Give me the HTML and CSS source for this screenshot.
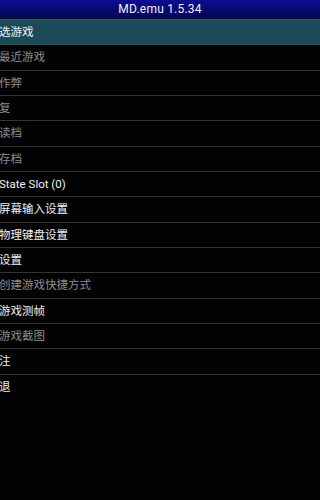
FILE: index.html
```html
<!DOCTYPE html>
<html lang="zh">
<head>
<meta charset="utf-8">
<link rel="stylesheet" href="styles.css">
</head>
<body>
<div class="app">
  <div class="titlebar">MD.emu 1.5.34</div>
  <ul class="menu">
    <li class="item selected">选游戏</li>
    <li class="item off">最近游戏</li>
    <li class="item off">作弊</li>
    <li class="item off">复</li>
    <li class="item off">读档</li>
    <li class="item off">存档</li>
    <li class="item">State Slot (0)</li>
    <li class="item">屏幕输入设置</li>
    <li class="item">物理键盘设置</li>
    <li class="item">设置</li>
    <li class="item off">创建游戏快捷方式</li>
    <li class="item">游戏测帧</li>
    <li class="item off">游戏截图</li>
    <li class="item">注</li>
    <li class="item last">退</li>
  </ul>
</div>
</body>
</html>
```
FILE: styles.css
```css
html, body {
  margin: 0;
  padding: 0;
  background: #020202;
}
.app {
  width: 100%;
  min-height: 500px;
  background: #020202;
  font-family: "Roboto", "Noto Sans CJK SC", sans-serif;
  overflow: hidden;
}
.titlebar {
  height: 19px;
  box-sizing: border-box;
  border-bottom: 1px solid #0a0a3a;
  background: linear-gradient(#0d0d96, #050552);
  color: #f0f0f0;
  font-size: 12px;
  line-height: 18px;
  text-align: center;
  letter-spacing: 0.2px;
}
.menu {
  list-style: none;
  margin: 0;
  padding: 0;
}
.item {
  box-sizing: border-box;
  height: 25.33px;
  border-bottom: 1.5px solid #343434;
  color: #f0f0f0;
  font-size: 11.5px;
  line-height: 24px;
  text-indent: -1px;
  white-space: nowrap;
}
.item.off {
  color: #8e8e8e;
}
.item.selected {
  background: #1c4a58;
  border-top: 1px solid #2f5c68;
  border-bottom: 1.5px solid #2c5663;
  color: #f4f4f4;
  height: 26.33px;
}
.item.last {
  border-bottom: none;
}
```
